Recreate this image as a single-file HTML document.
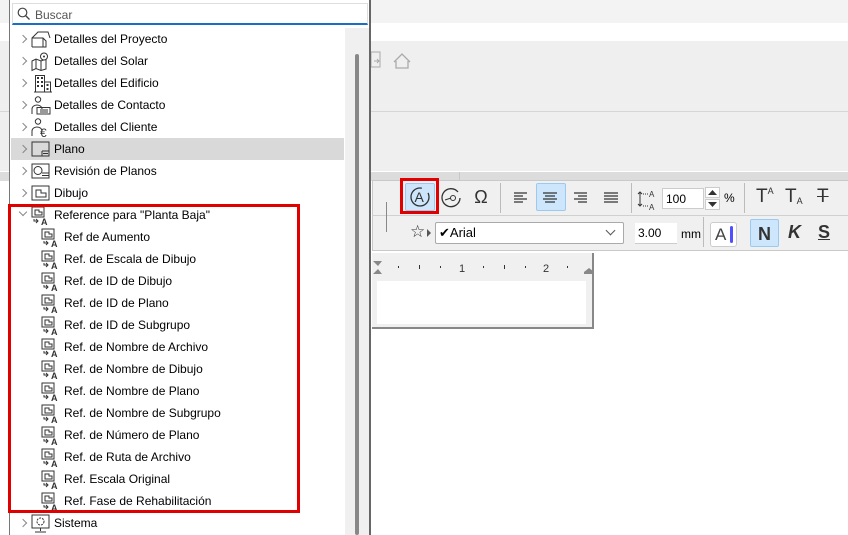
<!DOCTYPE html>
<html><head><meta charset="utf-8"><style>
*{margin:0;padding:0;box-sizing:border-box}
body{width:848px;height:535px;overflow:hidden;background:#fff;font-family:"Liberation Sans",sans-serif;font-size:12px;color:#000;position:relative}
.a{position:absolute}
.row{position:absolute;left:11px;width:333px;height:22px;line-height:22px;font-size:12px}
.chev{position:absolute;left:9px;top:8px;width:6px;height:6px;border-top:1px solid #888;border-right:1px solid #888;transform:rotate(45deg)}
.ic{position:absolute;top:2px;width:20px;height:19px;overflow:visible}
.tx{position:absolute;left:43px;top:0}
.sub .ic{left:30px}
.sub .tx{left:53px}
.btn{position:absolute;width:30px;height:28px;font-size:18px;text-align:center;line-height:28px;color:#333}
.sel{background:#cde6fb;border:1px solid #9cc9f0;border-radius:2px}
</style></head><body>
<div class="a" style="left:0;top:0;width:848px;height:23px;background:#f3f3f3"></div>
<div class="a" style="left:0;top:41px;width:848px;height:130px;background:#efefef"></div>
<div class="a" style="left:0;top:111px;width:848px;height:1px;background:#d6d6d6"></div>
<div class="a" style="left:0;top:172px;width:848px;height:9px;background:#dcdcdc"></div>
<div class="a" style="left:459px;top:172px;width:1px;height:9px;background:#c8c8c8"></div>
<svg class="a" style="left:370px;top:50px" width="50" height="22"><rect x="1" y="2" width="9" height="15" fill="none" stroke="#aaa"/><path d="M4 11h5M7 9l2 2-2 2" stroke="#aaa" fill="none"/><path d="M24 12l8-8 8 8M26 11v7h12v-7" stroke="#aaa" fill="none" stroke-width="1.3"/></svg>
<div class="a" style="left:372px;top:180px;width:476px;height:71px;background:#f0f0f0;border:1px solid #c9c9c9;border-right:none"></div>
<div class="a" style="left:372px;top:215px;width:476px;height:1px;background:#d0d0d0"></div>
<div class="a" style="left:386px;top:202px;width:1px;height:30px;background:#888"></div>
<div class="btn sel" style="left:405px;top:183px"></div>
<div class="a" style="left:400px;top:178px;width:39px;height:36px;border:3px solid #e00000"></div>
<svg class="a" style="left:408px;top:185px" width="24" height="24"><circle cx="12" cy="12" r="9" fill="none" stroke="#333" stroke-width="1.3" stroke-dasharray="44 8"/><text x="6.5" y="17" font-size="14" font-family="Liberation Sans" fill="#333">A</text></svg>
<svg class="a" style="left:439px;top:185px" width="24" height="24"><path d="M19 7a9 9 0 1 0 2 6" fill="none" stroke="#333" stroke-width="1.3"/><circle cx="14" cy="13" r="2.5" fill="none" stroke="#333"/><path d="M6 15l6-2" stroke="#333"/></svg>
<div class="btn" style="left:466px;top:183px;font-size:18px">Ω</div>
<div class="a" style="left:500px;top:183px;width:1px;height:30px;background:#bbb"></div>
<div class="btn sel" style="left:536px;top:183px"></div>
<svg class="a" style="left:510px;top:188px" width="130" height="20"><g stroke="#333" stroke-width="1.2"><path d="M4 5h13M4 8h9M4 11h13M4 14h9"/><path d="M33 5h14M35 8h10M33 11h14M35 14h10"/><path d="M64 5h13M68 8h9M64 11h13M68 14h9"/><path d="M94 5h14M94 8h14M94 11h14M94 14h14"/></g></svg>
<div class="a" style="left:631px;top:183px;width:1px;height:30px;background:#bbb"></div>
<svg class="a" style="left:636px;top:186px" width="24" height="26"><path d="M4 6v14M2 8l2-2 2 2M2 18l2 2 2-2" stroke="#333" fill="none"/><text x="13" y="11" font-size="8" fill="#333">A</text><text x="13" y="24" font-size="8" fill="#333">A</text><path d="M7 8h5M7 20h5" stroke="#333" stroke-dasharray="1 1"/></svg>
<div class="a" style="left:662px;top:188px;width:42px;height:21px;background:#fff;border:1px solid #ccc;font-size:12px;line-height:20px;padding-left:3px">100</div>
<svg class="a" style="left:705px;top:187px" width="16" height="24"><rect x="0.5" y="0.5" width="14" height="10" fill="#fff" stroke="#ccc"/><rect x="0.5" y="12.5" width="14" height="10" fill="#fff" stroke="#ccc"/><path d="M3 8l4.5-5 4.5 5zM3 15l4.5 5 4.5-5z" fill="#333"/></svg>
<div class="a" style="left:724px;top:191px;font-size:12px">%</div>
<div class="a" style="left:744px;top:183px;width:1px;height:30px;background:#bbb"></div>
<div class="a" style="left:756px;top:186px;font-size:19px;color:#333">T<span style="font-size:9px;vertical-align:top">A</span></div>
<div class="a" style="left:785px;top:186px;font-size:19px;color:#333">T<span style="font-size:9px;vertical-align:-2px">A</span></div>
<div class="a" style="left:817px;top:186px;font-size:19px;color:#333;text-decoration:line-through">T</div>
<div class="a" style="left:410px;top:222px;font-size:17px;color:#333">☆</div>
<div class="a" style="left:427px;top:229px;width:0;height:0;border-left:4px solid #555;border-top:4px solid transparent;border-bottom:4px solid transparent"></div>
<div class="a" style="left:435px;top:222px;width:189px;height:22px;background:#fff;border:1px solid #aaa;border-radius:2px;font-size:13px;line-height:20px;padding-left:3px">✔Arial</div>
<div class="a" style="left:607px;top:227px;width:7px;height:7px;border-right:1px solid #555;border-bottom:1px solid #555;transform:rotate(45deg)"></div>
<div class="a" style="left:635px;top:223px;width:42px;height:21px;background:#fff;border-bottom:1px solid #ccc;font-size:12px;line-height:21px;padding-left:3px">3.00</div>
<div class="a" style="left:681px;top:227px;font-size:12px">mm</div>
<div class="a" style="left:703px;top:217px;width:1px;height:30px;background:#bbb"></div>
<div class="a" style="left:710px;top:222px;width:27px;height:25px;background:#fff;border:1px solid #ccc;border-radius:3px;font-size:17px;line-height:23px;padding-left:4px;color:#444">A</div>
<div class="a" style="left:730px;top:226px;width:3px;height:17px;background:#5050ff;border-radius:2px"></div>
<div class="btn sel" style="left:750px;top:219px;font-weight:bold;font-size:18px;width:29px;height:28px">N</div>
<div class="a" style="left:788px;top:222px;font-size:18px;font-weight:bold;font-style:italic;color:#333">K</div>
<div class="a" style="left:818px;top:222px;font-size:18px;font-weight:bold;text-decoration:underline;color:#333">S</div>
<div class="a" style="left:372px;top:253px;width:222px;height:76px;background:#f0f0f0;border-right:2px solid #888;border-bottom:2px solid #888"></div>
<div class="a" style="left:377px;top:281px;width:209px;height:43px;background:#fff"></div>
<svg class="a" style="left:372px;top:259px" width="222" height="20"><path d="M1 2h9l-4 5zM1 15h9l-4-5zM212 15h9v-3l-4-3-5 4z" fill="#888"/><g fill="#333"><rect x="26" y="7" width="1" height="2"/><rect x="47" y="6" width="1" height="4"/><rect x="68" y="7" width="1" height="2"/><rect x="111" y="7" width="1" height="2"/><rect x="132" y="6" width="1" height="4"/><rect x="153" y="7" width="1" height="2"/><rect x="195" y="7" width="1" height="2"/></g><text x="87" y="13" font-size="11" fill="#333">1</text><text x="171" y="13" font-size="11" fill="#333">2</text></svg>
<div class="a" style="left:9px;top:0;width:362px;height:535px;background:#fff;border-left:1px solid #777;border-right:2px solid #666"></div>
<div class="a" style="left:12px;top:3px;width:356px;height:22px;background:#fff;border:1px solid #ddd;border-bottom:2px solid #1a6fc4"></div>
<svg class="a" style="left:17px;top:7px" width="14" height="14"><circle cx="5.5" cy="5.5" r="4.3" fill="none" stroke="#444" stroke-width="1.2"/><path d="M8.5 8.5l4 4" stroke="#444" stroke-width="1.3"/></svg>
<div class="a" style="left:35px;top:8px;font-size:12px;color:#555">Buscar</div>
<div class="a" style="left:345px;top:28px;width:24px;height:507px;background:#f0f0f0"></div>
<div class="a" style="left:355px;top:54px;width:4px;height:481px;background:#888;border-radius:2px"></div>
<div class="a" style="left:11px;top:138px;width:333px;height:22px;background:#d9d9d9"></div>

<div class="row" style="top:28px"><div class="chev"></div><svg class="ic" style="left:20px" width="20" height="19" viewBox="0 0 20 19"><path d="M1 17V8l6-6h10l2 6M1 8h11l3 3v6H1M12 8v9" fill="none" stroke="#333"/></svg><span class="tx">Detalles del Proyecto</span></div>
<div class="row" style="top:50px"><div class="chev"></div><svg class="ic" style="left:20px" width="20" height="19" viewBox="0 0 20 19"><path d="M1 9l4-2 5 2 5-2v10l-5 1.5-5-2-4 2zM5 7v9.5M10 9v9.5" fill="none" stroke="#333"/><circle cx="13" cy="4.5" r="3.5" fill="#fff" stroke="#333"/><circle cx="13" cy="4.5" r="1" fill="#333"/></svg><span class="tx">Detalles del Solar</span></div>
<div class="row" style="top:72px"><div class="chev"></div><svg class="ic" style="left:22px" width="18" height="19" viewBox="0 0 18 19"><path d="M1.5 18V1.5h9V18M10.5 8h6v10M0 18h18" fill="none" stroke="#333"/><g fill="#333"><rect x="3" y="3" width="2" height="2"/><rect x="7" y="3" width="2" height="2"/><rect x="3" y="7" width="2" height="2"/><rect x="7" y="7" width="2" height="2"/><rect x="3" y="11" width="2" height="2"/><rect x="7" y="11" width="2" height="2"/><rect x="12.5" y="10" width="2" height="2"/><rect x="12.5" y="14" width="2" height="2"/></g></svg><span class="tx">Detalles del Edificio</span></div>
<div class="row" style="top:94px"><div class="chev"></div><svg class="ic" style="left:20px" width="20" height="19" viewBox="0 0 20 19"><circle cx="7" cy="3.5" r="2.7" fill="none" stroke="#333"/><path d="M1 18v-5a5 4 0 0 1 10 0M6 11.5h13v6.5H6z" fill="none" stroke="#333"/><path d="M9 14h8M9 16h8" stroke="#333"/></svg><span class="tx">Detalles de Contacto</span></div>
<div class="row" style="top:116px"><div class="chev"></div><svg class="ic" style="left:20px" width="20" height="19" viewBox="0 0 20 19"><circle cx="7" cy="3.5" r="2.7" fill="none" stroke="#333"/><path d="M1 18v-5a5 4 0 0 1 10 0" fill="none" stroke="#333"/><text x="9" y="19" font-size="12" fill="#333">€</text></svg><span class="tx">Detalles del Cliente</span></div>
<div class="row" style="top:138px"><div class="chev"></div><svg class="ic" style="left:20px" width="20" height="19" viewBox="0 0 20 19"><rect x="1" y="2" width="17" height="14" fill="none" stroke="#333"/><path d="M11 11h7M11 11v5M12 13.5h5" stroke="#333" fill="none"/></svg><span class="tx">Plano</span></div>
<div class="row" style="top:160px"><div class="chev"></div><svg class="ic" style="left:20px" width="20" height="19" viewBox="0 0 20 19"><rect x="1" y="2" width="17" height="14" fill="none" stroke="#333"/><circle cx="7" cy="8.5" r="4" fill="none" stroke="#333"/><path d="M11 11h7M11 13.5h7" stroke="#333"/></svg><span class="tx">Revisión de Planos</span></div>
<div class="row" style="top:182px"><div class="chev"></div><svg class="ic" style="left:20px" width="20" height="19" viewBox="0 0 20 19"><rect x="1" y="2" width="17" height="14" fill="none" stroke="#333"/><path d="M5 13V6h5v3h5v4z" fill="none" stroke="#333"/></svg><span class="tx">Dibujo</span></div>
<div class="row" style="top:204px"><div class="chev" style="transform:rotate(135deg);top:5px"></div><svg class="ic" style="left:20px" width="20" height="19" viewBox="0 0 20 19"><rect x="1" y="1" width="12" height="10" fill="none" stroke="#333"/><path d="M4 9V4h4v2h3v3z" fill="none" stroke="#333"/><path d="M3 13v2h4M5 13l2 2-2 2" fill="none" stroke="#333"/><text x="10" y="19" font-size="9" font-weight="bold" fill="#333">A</text></svg><span class="tx">Reference para "Planta Baja"</span></div>

<div id="subs"></div>
<div class="row" style="top:512px"><div class="chev"></div><svg class="ic" style="left:20px" width="20" height="19" viewBox="0 0 20 19"><rect x="1" y="1" width="17" height="13" fill="none" stroke="#333"/><circle cx="9.5" cy="7.5" r="3.5" fill="none" stroke="#333" stroke-dasharray="2 1"/><path d="M9.5 14v3M4 18h11" stroke="#333"/></svg><span class="tx">Sistema</span></div>

<script>
var n=["Ref de Aumento","Ref. de Escala de Dibujo","Ref. de ID de Dibujo","Ref. de ID de Plano","Ref. de ID de Subgrupo","Ref. de Nombre de Archivo","Ref. de Nombre de Dibujo","Ref. de Nombre de Plano","Ref. de Nombre de Subgrupo","Ref. de Número de Plano","Ref. de Ruta de Archivo","Ref. Escala Original","Ref. Fase de Rehabilitación"];
var ic='<svg class="ic" width="20" height="19" viewBox="0 0 20 19"><rect x="1" y="1" width="12" height="10" fill="none" stroke="#333"/><path d="M4 9V4h4v2h3v3z" fill="none" stroke="#333"/><path d="M3 13v2h4M5 13l2 2-2 2" fill="none" stroke="#333"/><text x="10" y="19" font-size="9" font-weight="bold" fill="#333">A</text></svg>';
var h='';n.forEach(function(t,i){h+='<div class="row sub" style="top:'+(226+22*i)+'px">'+ic+'<span class="tx">'+t+'</span></div>'});
document.getElementById('subs').outerHTML=h;
</script>
<div class="a" style="left:8px;top:204px;width:292px;height:309px;border:3px solid #e00000"></div>
</body></html>
